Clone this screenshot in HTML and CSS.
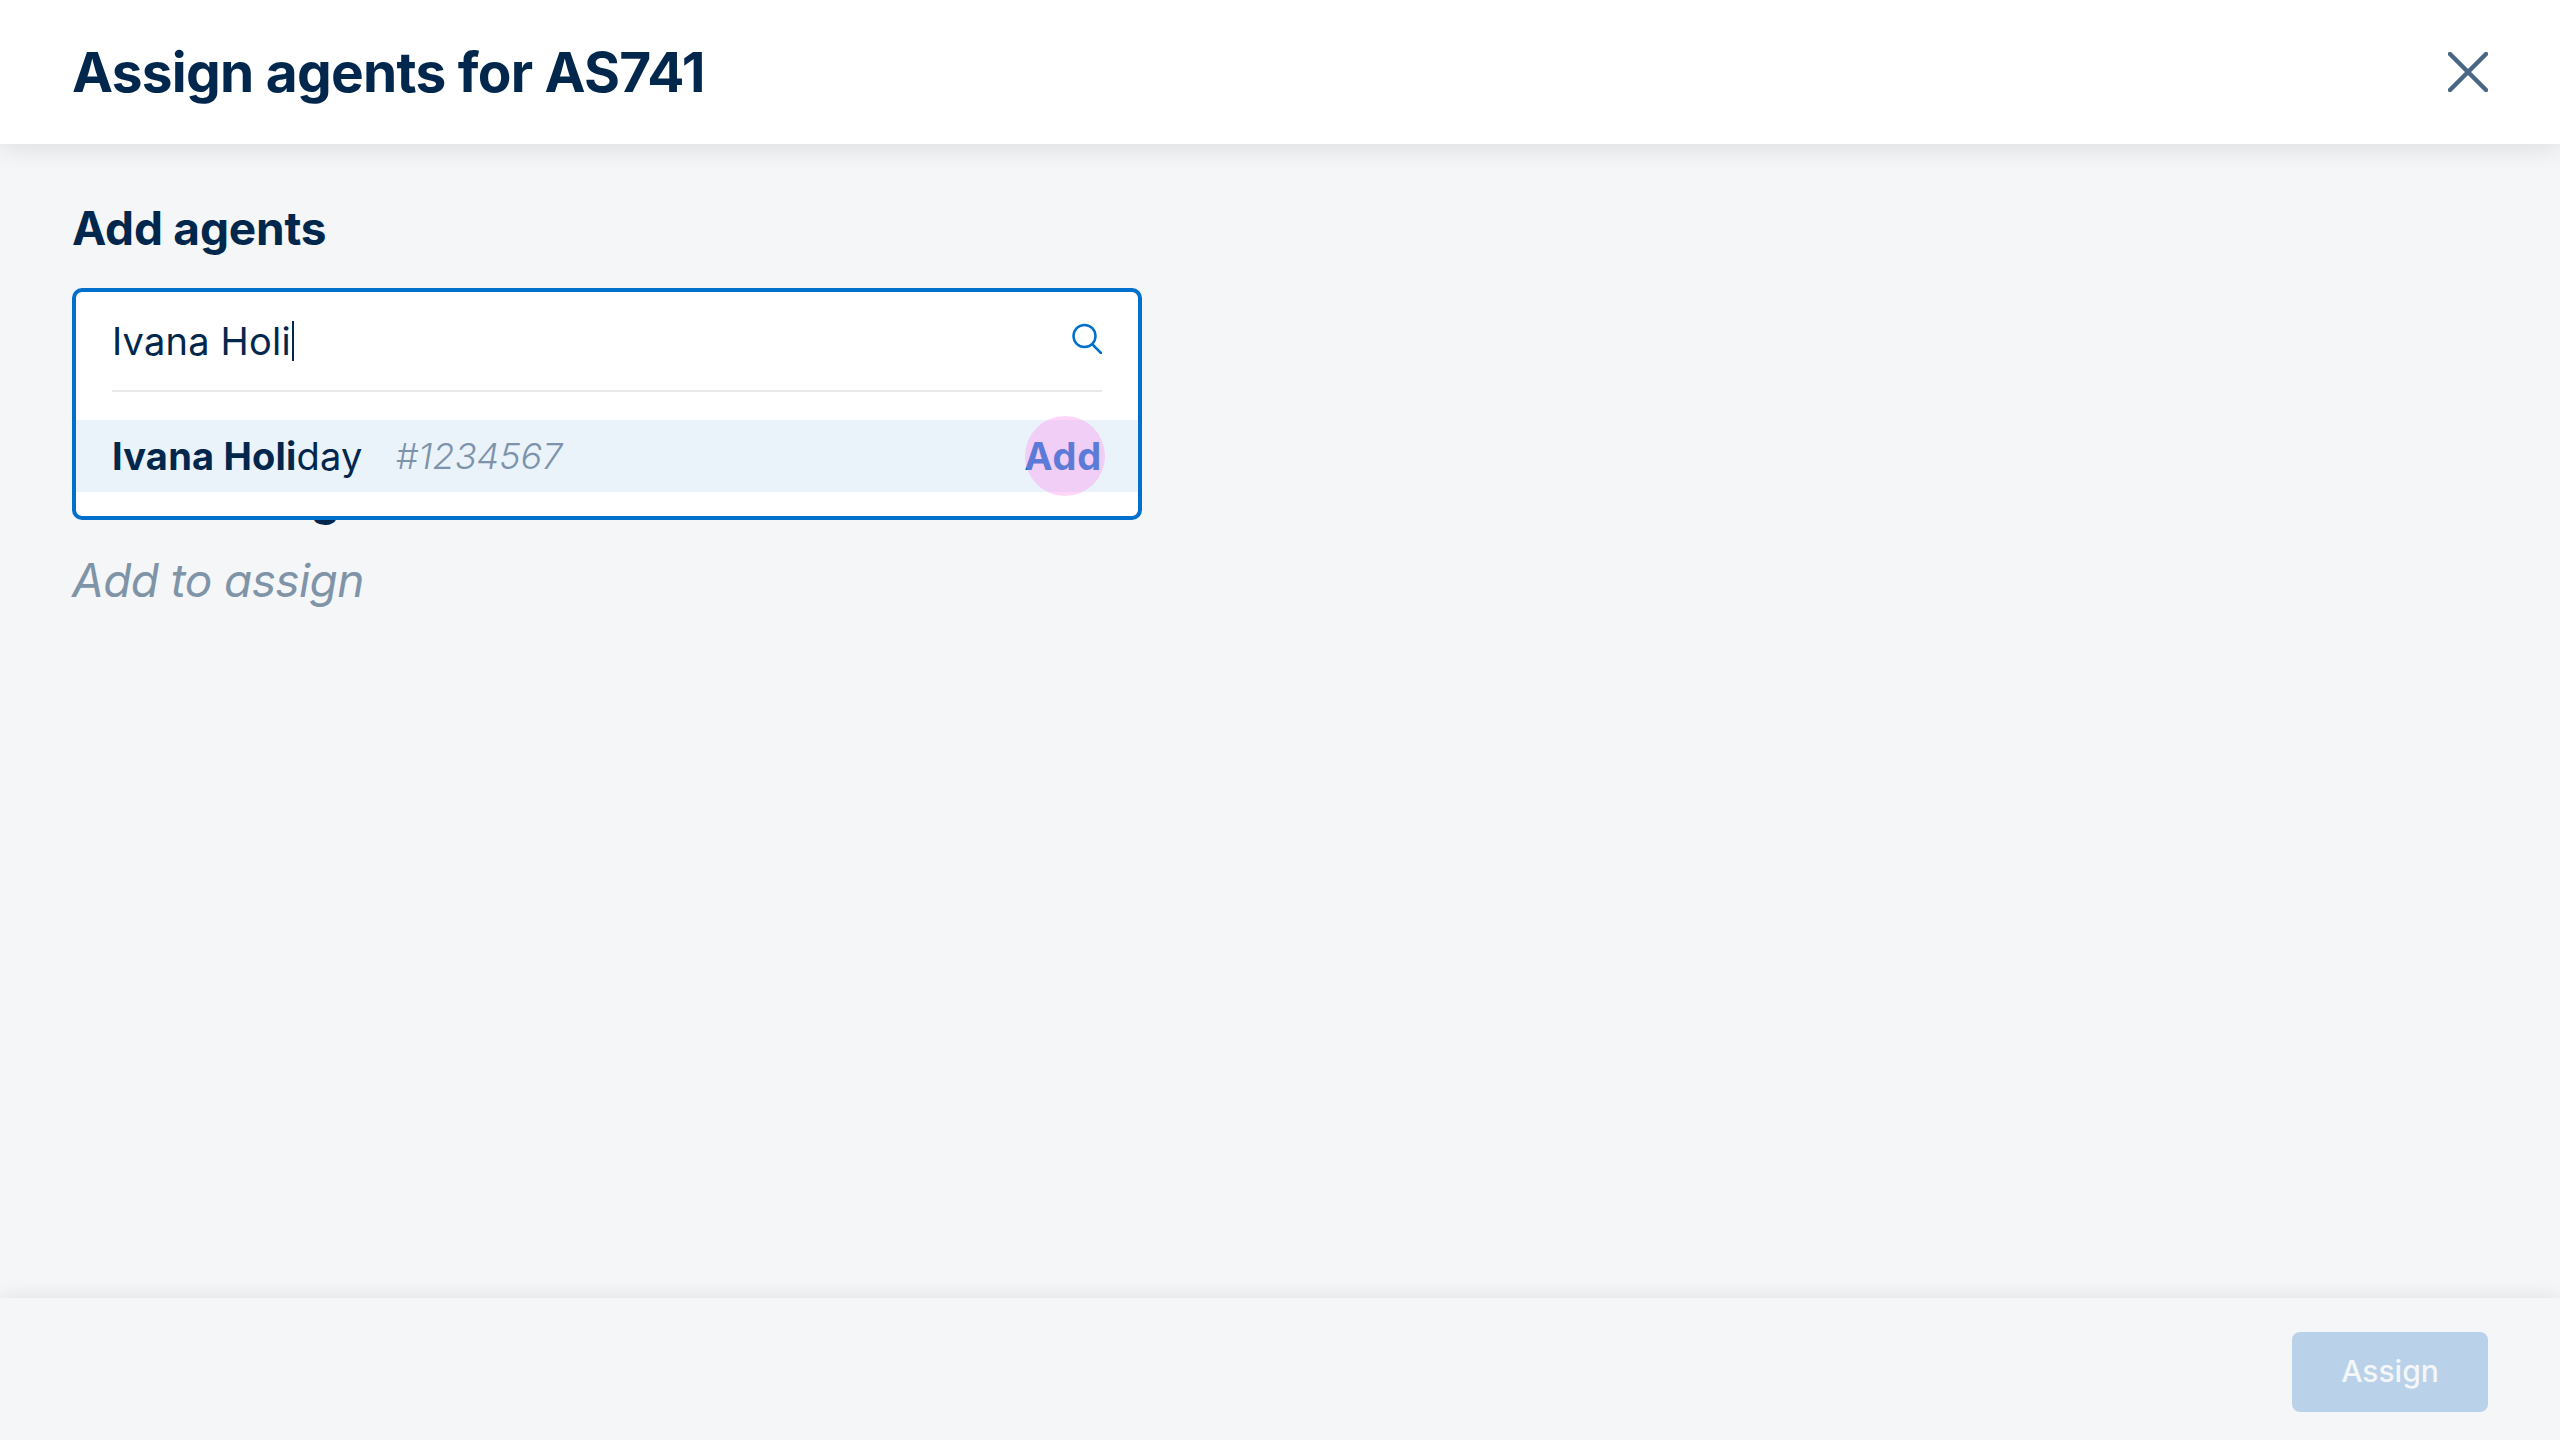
FILE: index.html
```html
<!DOCTYPE html>
<html lang="en">
  <head>
    <meta charset="UTF-8" />
    <title>Assign agents</title>
    <link rel="stylesheet" href="styles.css">
  </head>
  <body>
    <!-- Header with title and close button -->
    <header class="top-bar">
      <h1 class="title">Assign agents for AS741</h1>
      <svg class="close-icon" width="40" height="40" viewBox="0 0 40 40" fill="none" stroke="#4a6885" stroke-width="4.5" stroke-linecap="round">
        <path d="M2 2L38 38M38 2L2 38" />
      </svg>
    </header>

    <main class="content">
      <h2 class="section-title">Add agents</h2>

      <div class="search-wrap">
        <!-- Dropdown sits over the next heading -->
        <div class="search-box">
          <div class="search-input">
            <span class="typed">Ivana Holi</span><span class="caret"></span>
            <svg class="search-icon" width="32" height="32" viewBox="0 0 32 32" fill="none" stroke="#0070cc" stroke-width="2.5">
              <circle cx="14.5" cy="14" r="11" />
              <path d="M22.5 22.5L31 31" stroke-linecap="round" />
            </svg>
          </div>
          <div class="result-row">
            <span class="agent-name"><b>Ivana Holi</b>day</span>
            <span class="agent-id">#1234567</span>
            <span class="add-link">Add</span>
            <span class="touch-dot"></span>
          </div>
        </div>
      </div>

      <h2 class="section-title section-under">Selected agents</h2>
      <p class="empty-note">Add to assign</p>
    </main>

    <footer class="bottom-bar">
      <button class="assign-btn">Assign</button>
    </footer>
  </body>
</html>
```

FILE: styles.css
```css
html, body {
  height: 100%;
}

body {
  margin: 0;
  display: flex;
  flex-direction: column;
  background-color: #f4f6f8;
  color: #02274d;
  font-family: "Inter", "Lato", sans-serif;
}

/* Header */
.top-bar {
  height: 144px;
  padding: 0 72px;
  display: flex;
  align-items: center;
  justify-content: space-between;
  background-color: #fff;
  box-shadow: 0 4px 24px rgba(0, 0, 0, 0.1);
  position: relative;
}

.title {
  margin: 0;
  font-size: 55px;
  font-weight: 700;
  line-height: 72px;
  letter-spacing: -0.75px;
}

.close-icon {
  display: block;
}

/* Main area */
.content {
  flex: 1;
  padding: 0 72px;
}

.section-title {
  margin: 0;
  font-size: 46px;
  font-weight: 700;
  line-height: 60px;
  letter-spacing: -0.2px;
}

.content > .section-title:first-child {
  margin-top: 54px;
}

.search-wrap {
  position: relative;
  height: 232px;
  margin-top: 30px;
}

.search-box {
  position: absolute;
  top: 0;
  left: 0;
  width: 1070px;
  height: 232px;
  box-sizing: border-box;
  border: 4px solid #0070cc;
  border-radius: 10px;
  background-color: #fff;
}

.search-input {
  height: 98px;
  margin: 0 36px;
  display: flex;
  align-items: center;
  border-bottom: 2px solid #e8e8e8;
  font-size: 38px;
  letter-spacing: 0.2px;
  position: relative;
}

.caret {
  width: 2px;
  height: 40px;
  margin-left: 1px;
  background-color: #02274d;
}

.search-icon {
  position: absolute;
  right: 0;
  top: 30px;
}

.result-row {
  height: 72px;
  margin-top: 28px;
  padding: 0 36px;
  display: flex;
  align-items: center;
  background-color: #eaf2fa;
  position: relative;
}

.agent-name {
  font-size: 38px;
  letter-spacing: 0.2px;
}

.agent-name b {
  font-weight: 700;
}

.agent-id {
  margin-left: 33px;
  font-size: 36px;
  font-weight: 300;
  font-style: italic;
  color: #7d93ab;
}

.add-link {
  margin-left: auto;
  font-size: 38px;
  font-weight: 700;
  letter-spacing: 0.8px;
  color: #0070cc;
}

.touch-dot {
  position: absolute;
  right: 33px;
  top: -4px;
  width: 80px;
  height: 80px;
  border-radius: 50%;
  background-color: rgba(255, 140, 236, 0.36);
}

.section-under {
  margin-top: -52px;
  letter-spacing: 0.4px;
}

.empty-note {
  margin: 22px 0 0;
  font-size: 46px;
  line-height: 60px;
  font-style: italic;
  font-weight: 400;
  letter-spacing: -0.6px;
  color: #8094a8;
}

/* Footer */
.bottom-bar {
  height: 142px;
  padding: 34px 72px 0 0;
  box-sizing: border-box;
  display: flex;
  justify-content: flex-end;
  align-items: flex-start;
  background-color: #f4f6f8;
  box-shadow: 0 -4px 16px rgba(0, 0, 0, 0.07);
  position: relative;
}

.assign-btn {
  width: 196px;
  height: 80px;
  padding: 0 0 2px;
  border: none;
  border-radius: 8px;
  background-color: #b9d2e9;
  color: #f4f6f8;
  font-family: inherit;
  font-size: 30px;
  font-weight: 500;
}
```
